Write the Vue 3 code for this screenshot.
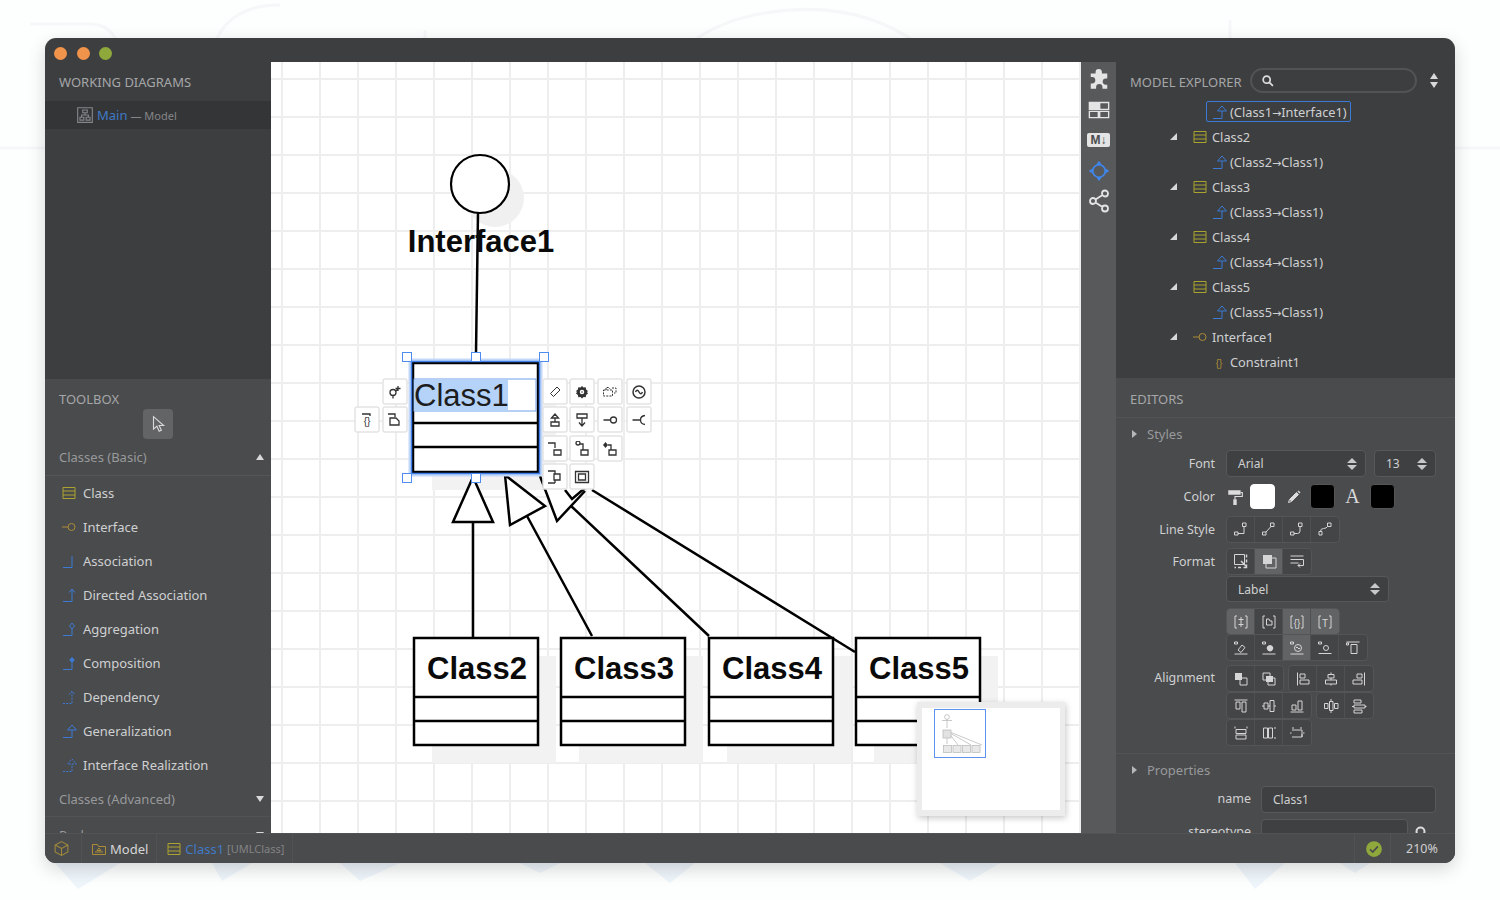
<script setup>
import { h } from 'vue';

const icons = {
  cursor: { s: 'M4 1.5v11l3-2.5 2 4.5 2-1-2-4.2h4z' },
  class: { s: 'M2 2.5h12v11H2zM2 6h12M2 10h12' },
  iface: { s: 'M1 8h6M7 8a3.5 3.5 0 1 0 7 0a3.5 3.5 0 1 0-7 0' },
  assoc: { s: 'M2 14.5h9V3' },
  directed: { s: 'M2 14.5h9V3M8 5.5l3-3.5 3 3.5' },
  aggregation: { s: 'M2 14.5h9V8M11 2l2.5 3-2.5 3-2.5-3z' },
  composition: { s: 'M2 14.5h9V8', f: 'M11 2l2.8 3-2.8 3-2.8-3z' },
  dependency: { s: 'M2 14.5h9V3M8 5.5l3-3.5 3 3.5', dash: true },
  generalization: { s: 'M2 14.5h9V7M6.5 7L11 2l4.5 5z' },
  realization: { s: 'M2 14.5h9V7M6.5 7L11 2l4.5 5z', dash: true },
  braces: { t: '{}' },
  diagram: { s: 'M1.5 1.5h13v13h-13zM6 3.5h4v2.5H6zM3.5 10h3.5v2.5H3.5zM9 10h3.5v2.5H9zM8 6v2M5 10V8h6v2' },
  model: { s: 'M1.5 3.5h5l1 2h7v8h-13zM4 11h8M8 7l2 2.5H6z' },
  cube: { s: 'M8 1.5l6 3.2v6.6l-6 3.2-6-3.2V4.7zM2 4.7L8 8l6-3.3M8 8v6.5' },
  check: { f: 'M8 1a7 7 0 1 0 0 14A7 7 0 0 0 8 1z', s2: 'M4.5 8.3l2.4 2.4 4.6-5' },
  search: { s: 'M2.5 6.5a4 4 0 1 0 8 0a4 4 0 1 0-8 0M9.6 9.6l4 4', w: 2 },
  puzzle: { f: 'M5.5 3a2.3 2.3 0 0 1 4.6 0V4H14v3.6h-1a2.3 2.3 0 0 0 0 4.6h1V15H10.5v-1a2.3 2.3 0 0 0-4.6 0v1H2v-3.8h1a2.3 2.3 0 0 0 0-4.6H2V4h3.5z' },
  panels: { s: 'M1 2.5h6.5v5H1zM8.5 2.5H15v5H8.5zM1 9h6.5v4.5H1zM8.5 9H15v4.5H8.5z', f: 'M1 2.5h6.5v5H1z' },
  target: { s: 'M3 8a5 5 0 1 0 10 0a5 5 0 1 0-10 0M6.5 3.2L8 1l1.5 2.2M6.5 12.8L8 15l1.5-2.2M3.2 6.5L1 8l2.2 1.5M12.8 6.5L15 8l-2.2 1.5', w: 1.3 },
  share: { s: 'M2 8a2 2 0 1 0 4 0a2 2 0 1 0-4 0M10 3a2 2 0 1 0 4 0a2 2 0 1 0-4 0M10 13a2 2 0 1 0 4 0a2 2 0 1 0-4 0M5.7 7l4.6-3M5.7 9l4.6 3', w: 1.2 },
  roller: { s: 'M13 4h1.5v3.5H8V10', f: 'M2 2h11v4H2zM6.5 10h3v5h-3z' },
  pen: { s: 'M2.5 13.5l1-3 7-7 2 2-7 7z', f: 'M3.5 10.5l7-7 2 2-7 7zM11.5 2.5l1-1 2 2-1 1z' },
  lineRect: { s: 'M1.5 11h3.5v3H1.5zM5 12.5h6V5.5M9.5 2H13v3.5H9.5z' },
  lineOblique: { s: 'M1.5 11h3.5v3H1.5zM5 11l5-5.5M9.5 2H13v3.5H9.5z' },
  lineRound: { s: 'M1.5 11h3.5v3H1.5zM5 12.5h3.5q2.5 0 2.5-2.5V5.5M9.5 2H13v3.5H9.5z' },
  lineCurve: { s: 'M2 10.5h3v3.5H2zM3.5 10.5q0-3 3-3t4-2M10.5 2H14v3.5h-3.5z' },
  fit: { s: 'M1.5 1.5h10v10h-10z', s2: 'M13.5 1.5v3M13.5 6.5v3M13.5 11.5v3h-3M8 14.5H5M3 14.5H1.5M8 8l5 5' },
  shadow: { s: 'M5 5h10v10H5z', f: 'M2 2h9v9H2z' },
  wrap: { s: 'M1.5 3h13M1.5 6.5h13M1.5 10h8M14.5 6.5v6H9M11 10.5L9 12.5l2 2' },
  brPlus: { s: 'M4 2H2v12h2M12 2h2v12h-2M8 3v10M5.5 5.5h5M5.5 10.5h5' },
  brNote: { s: 'M4 2H2v12h2M12 2h2v12h-2M5.5 5h2.5l1 2h2v4h-5.5z' },
  brBrace: { s: 'M4 2H2v12h2M12 2h2v12h-2', t: '{}' },
  brText: { s: 'M4 2H2v12h2M12 2h2v12h-2', t: 'T' },
  alTag: { s: 'M1.5 14h13M1.5 2h3v2h-3zM9 5l3 2.5-4 5-3-2.5z' },
  alGear: { s: 'M1.5 14h13M1.5 2h3v2h-3z', f: 'M9 5a3.2 3.2 0 1 0 .01 0z' },
  alWeb: { s: 'M1.5 14h13M1.5 2h3v2h-3zM5.5 8a3.5 3.5 0 1 0 7 0a3.5 3.5 0 1 0-7 0M7 8q1-2 2 0t2 0' },
  alDot: { s: 'M1.5 13.5h13M1.5 2h3v2h-3zM6.5 8a2.5 2.5 0 1 0 5 0a2.5 2.5 0 1 0-5 0' },
  alBox: { s: 'M1.5 2h13M1.5 3h2v2h-2zM6 4.5h6v9H6z' },
  front: { s: 'M7 7h7v7H7z', f: 'M2 2h7v7H2z' },
  back: { s: 'M2 2h7v7H2zM7 7h7v7H7z', f: 'M5 5h7v6H5z' },
  left: { s: 'M2.5 1.5v13M5 3h5v4H5zM5 9h9v4H5z' },
  center: { s: 'M8 1.5v2M8 7v2M8 13v1.5M5 3.5h6V7H5zM2.5 9h11v4h-11z' },
  right: { s: 'M13.5 1.5v13M6 3h5v4H6zM2 9h9v4H2z' },
  top: { s: 'M1.5 2h13M3 4h4v7H3zM9 4h4v10H9z' },
  middle: { s: 'M1 8h2M7 8h2M13 8h2M3 5h4v6H3zM9 2.5h4v11H9z' },
  bottom: { s: 'M1.5 14h13M3 7h4v5H3zM9 3h4v9H9z' },
  spaceH: { s: 'M1.5 5.5h3.5v5H1.5zM6.5 3.5h3.5v9H6.5zM11.5 5.5H15v5h-3.5zM8 1v2M8 13v2' },
  spaceV: { s: 'M3 2h7v3H3zM3 7h11v3H3zM3 12h8v3H3zM1 8.5h2M14 8.5h1.5' },
  sizeH: { s: 'M2 1.5v2M14 1.5v2M3 4.5h10v4H3zM3 10h10v4H3z' },
  sizeW: { s: 'M2.5 3h4v10h-4zM7.5 3h4v10h-4zM13 3h2M13 13h2' },
  sizeXY: { s: 'M4 2v2M12 2v2M3 5h10v7H3M13 9v3M1 8h1.5M14 8h1.5' },
  tag: { s: 'M10 3l3 3-6.5 6.5-3-3z' },
  gear: { f: 'M8 2l1.5 1.6 2.2-.4.4 2.2L14 6.9 13 8l1 1.6-1.9 1.5-.4 2.2-2.2-.4L8 14.5l-1.5-1.6-2.2.4-.4-2.2L2 9.6 3 8 2 6.9l1.9-1.5.4-2.2 2.2.4z', s2: 'M6.5 8a1.5 1.5 0 1 0 3 0a1.5 1.5 0 1 0-3 0', light: true },
  dashBox: { s: 'M1.5 6h9v6h-9zM4 6V3.5h3l1 1.5M10 4h4v5h-2', dash: true },
  webCircle: { s: 'M2 8a6 6 0 1 0 12 0a6 6 0 1 0-12 0M4.5 8q1.7-3.5 3.5 0t3.5 0', w: 1.5 },
  inherit: { s: 'M4 10h8v4H4zM8 10V6M4.5 6L8 2l3.5 4z', w: 1.3 },
  inheritDown: { s: 'M3 2h10v4H3zM8 6v8M5 10.5L8 14l3-3.5', w: 1.3 },
  lollipop: { s: 'M1.5 8h7M8.5 8a3 3 0 1 0 6 0a3 3 0 1 0-6 0', w: 1.3 },
  socket: { s: 'M1.5 8h8M14 3.5Q9.5 4 9.5 8t4.5 4.5', w: 1.3 },
  boxA: { s: 'M1 2h7v5M7 9h7v5H7z', w: 1.3 },
  boxB: { s: 'M2 2a2 2 0 1 0 4 0a2 2 0 1 0-4 0M6 3h3v6M7 9h7v5H7z', w: 1.3 },
  boxC: { s: 'M6 4h3v5M7 9h7v5H7z', f: 'M3.5 1l2.5 3-2.5 3L1 4z', w: 1.3 },
  boxD: { s: 'M1 2h7v3M1 14h7M7 5h6v6H7zM8 11v3', w: 1.3 },
  frame: { s: 'M1.5 2.5h13v11h-13zM4.5 5h7v6h-7z', w: 1.3 },
  lollipopPlus: { s: 'M3 8.5a3 3 0 1 0 6 0a3 3 0 1 0-6 0M6 11.5v3M9 7l2.5-2.5M11 2v5M8.5 4.5h5', w: 1.3 },
  note: { s: 'M1 2h7v3M3 6h6l3 3v4H3z', w: 1.3 },
  noteBrace: { s: 'M3 2h8v2', t: '{}', w: 1.3 },
};

// small icon renderer, every glyph lives in a 16x16 box
const Icon = (props) => {
  const def = icons[props.name] || {};
  const kids = [];
  if (def.f) kids.push(h('path', { d: def.f, fill: 'currentColor', stroke: 'none' }));
  if (def.s) kids.push(h('path', { d: def.s, 'stroke-dasharray': def.dash ? '2 1.2' : null }));
  if (def.s2) kids.push(h('path', { d: def.s2, stroke: def.f ? (def.light ? '#fff' : '#4a4b4d') : 'currentColor', 'stroke-width': 1.5 }));
  if (def.t) kids.push(h('text', { x: 8, y: 12.5, 'text-anchor': 'middle', 'font-size': 10, 'font-family': 'Liberation Sans, sans-serif', fill: 'currentColor', stroke: 'none' }, def.t));
  const size = props.size || 16;
  return h('svg', {
    x: props.x, y: props.y, width: size, height: size, viewBox: '0 0 16 16',
    fill: 'none', stroke: 'currentColor', 'stroke-width': def.w || 1,
    style: 'display:block;flex:none',
  }, kids);
};

const toolItems = [
  { label: 'Class', icon: 'class', tone: 'olive' },
  { label: 'Interface', icon: 'iface', tone: 'gold' },
  { label: 'Association', icon: 'assoc', tone: 'blue' },
  { label: 'Directed Association', icon: 'directed', tone: 'blue' },
  { label: 'Aggregation', icon: 'aggregation', tone: 'blue' },
  { label: 'Composition', icon: 'composition', tone: 'blue' },
  { label: 'Dependency', icon: 'dependency', tone: 'blue' },
  { label: 'Generalization', icon: 'generalization', tone: 'blue' },
  { label: 'Interface Realization', icon: 'realization', tone: 'blue' },
];

const treeRows = [
  { from: '(Class1', to: 'Interface1)', icon: 'generalization', tone: 'blue', child: true, selected: true },
  { label: 'Class2', icon: 'class', tone: 'olive' },
  { from: '(Class2', to: 'Class1)', icon: 'generalization', tone: 'blue', child: true },
  { label: 'Class3', icon: 'class', tone: 'olive' },
  { from: '(Class3', to: 'Class1)', icon: 'generalization', tone: 'blue', child: true },
  { label: 'Class4', icon: 'class', tone: 'olive' },
  { from: '(Class4', to: 'Class1)', icon: 'generalization', tone: 'blue', child: true },
  { label: 'Class5', icon: 'class', tone: 'olive' },
  { from: '(Class5', to: 'Class1)', icon: 'generalization', tone: 'blue', child: true },
  { label: 'Interface1', icon: 'iface', tone: 'gold' },
  { label: 'Constraint1', icon: 'braces', tone: 'gold', child: true },
];

const railIcons = [
  { name: 'puzzle', size: 22 },
  { name: 'panels', size: 22 },
  { name: 'md' },
  { name: 'target', size: 20, active: true },
  { name: 'share', size: 24 },
];

const alignRows = [
  [{ items: [{ n: 'brPlus', on: true }, { n: 'brNote' }, { n: 'brBrace', on: true }, { n: 'brText', on: true }] }],
  [{ items: [{ n: 'alTag' }, { n: 'alGear' }, { n: 'alWeb', on: true }, { n: 'alDot' }, { n: 'alBox' }] }],
  [{ items: [{ n: 'front' }, { n: 'back' }] }, { items: [{ n: 'left' }, { n: 'center' }, { n: 'right' }] }],
  [{ items: [{ n: 'top' }, { n: 'middle' }, { n: 'bottom' }] }, { items: [{ n: 'spaceH' }, { n: 'spaceV' }] }],
  [{ items: [{ n: 'sizeH' }, { n: 'sizeW' }, { n: 'sizeXY' }] }],
];

const classBoxes = [
  { name: 'Class2', x: 414 },
  { name: 'Class3', x: 561 },
  { name: 'Class4', x: 709 },
  { name: 'Class5', x: 856 },
];

const handles = [[407, 357], [476, 357], [544, 357], [407, 478], [476, 478]];

const quickButtons = [
  { x: 383, y: 379, icon: 'lollipopPlus' }, { x: 355, y: 407, icon: 'noteBrace' }, { x: 383, y: 407, icon: 'note' },
  { x: 543, y: 379, icon: 'tag' }, { x: 570, y: 379, icon: 'gear' }, { x: 598, y: 379, icon: 'dashBox' }, { x: 627, y: 379, icon: 'webCircle' },
  { x: 543, y: 407, icon: 'inherit' }, { x: 570, y: 407, icon: 'inheritDown' }, { x: 598, y: 407, icon: 'lollipop' }, { x: 627, y: 407, icon: 'socket' },
  { x: 543, y: 436, icon: 'boxA' }, { x: 570, y: 436, icon: 'boxB' }, { x: 598, y: 436, icon: 'boxC' },
  { x: 543, y: 464, icon: 'boxD' }, { x: 570, y: 464, icon: 'frame' },
];
</script>

<template>
  <div class="page">
    <svg class="backdrop" viewBox="0 0 1500 900" aria-hidden="true">
      <g fill="none" stroke="#f6f7f9" stroke-width="3">
        <path d="M30 24h60q30 0 30 40v85M210 150V60q10-55 70-55M425 150V30M640 150Q650 20 790 10T1000 150M1180 60h120M1230 20v130M0 148h1500" />
      </g>
      <g fill="#eef5fb">
        <path d="M55 863h65l-42 26zM212 863h40l-30 18zM340 863h60l-40 18zM520 863h40l-20 10zM645 863h50l-25 20zM940 863h60l-30 18zM1235 863h50l-30 26zM1340 863h30l-15 10z" />
      </g>
    </svg>

    <div class="window">
      <div class="titlebar">
        <span class="dot orange"></span>
        <span class="dot orange"></span>
        <span class="dot green"></span>
      </div>

      <div class="main">
        <aside class="left">
          <section class="working">
            <h3 class="caption">WORKING DIAGRAMS</h3>
            <div class="diagram-row">
              <span class="grey"><Icon name="diagram" :size="18" /></span>
              <span class="link">Main</span>
              <span class="dim">— Model</span>
            </div>
          </section>

          <section class="toolbox">
            <h3 class="caption tool-caption">TOOLBOX</h3>
            <div class="cursor-wrap">
              <span class="cursor-btn"><Icon name="cursor" :size="18" /></span>
            </div>
            <div class="group-head first">
              <span>Classes (Basic)</span>
              <i class="tri up"></i>
            </div>
            <div class="tool-list">
              <div v-for="item in toolItems" :key="item.label" class="tool-item">
                <span :class="item.tone"><Icon :name="item.icon" /></span>
                <span>{{ item.label }}</span>
              </div>
            </div>
            <div class="group-head adv">
              <span>Classes (Advanced)</span>
              <i class="tri down"></i>
            </div>
            <div class="group-head pack">
              <span>Packages</span>
              <i class="tri down"></i>
            </div>
          </section>
        </aside>

        <div class="canvas">
          <svg class="diagram" viewBox="271 62 810 771" width="810" height="771">
            <circle cx="495" cy="198" r="29" fill="#f0f0f0" />
            <circle cx="480" cy="184" r="29" fill="#fff" stroke="#000" stroke-width="2.2" />
            <path d="M478 213L476 353" stroke="#000" stroke-width="2.5" />
            <text x="481" y="252" class="bold-name" font-size="31">Interface1</text>

            <g v-for="box in classBoxes" :key="box.name">
              <rect :x="box.x + 18" y="656" width="124" height="107" fill="#f2f2f2" />
            </g>
            <rect x="432" y="380" width="124" height="110" fill="#f2f2f2" />

            <g fill="none" stroke="#000" stroke-width="2.5">
              <path d="M473 522V638M527 516L592 636M570 505L709 636M592 490L855 652" />
            </g>
            <g fill="#fff" stroke="#000" stroke-width="2.5" stroke-linejoin="miter">
              <path d="M473 477L453 522H493Z" />
              <path d="M505 475L510 525L545 506Z" />
              <path d="M540 476L557 521L585 491" />
              <path d="M565 490L572 499L585 488" />
            </g>

            <g v-for="box in classBoxes" :key="box.name + '-box'">
              <rect :x="box.x" y="638" width="124" height="107" fill="#fff" stroke="#000" stroke-width="2.5" />
              <path :d="`M${box.x} 697h124M${box.x} 721h124`" stroke="#000" stroke-width="2.5" />
              <text :x="box.x + 63" y="679" class="bold-name" font-size="31">{{ box.name }}</text>
            </g>

            <!-- selected class -->
            <rect x="410" y="360" width="131" height="115" fill="none" stroke="#c4d8f8" stroke-width="3" />
            <rect x="413" y="363" width="125" height="109" fill="#fff" stroke="#000" stroke-width="2.5" />
            <rect x="411.5" y="361.5" width="128" height="112" fill="none" stroke="#3f7ee8" stroke-width="1.5" />
            <path d="M413 423h125M413 447h125" stroke="#000" stroke-width="2.5" />
            <rect x="414" y="379" width="122" height="32" fill="#fff" stroke="#6f9fea" stroke-width="1" />
            <rect x="414" y="380" width="94" height="31" fill="#b5d2f8" />
            <text x="414" y="406" class="edit-name" font-size="31">Class1</text>
            <rect v-for="p in handles" :key="p.join()" :x="p[0] - 4.5" :y="p[1] - 4.5" width="9" height="9" fill="#fff" stroke="#4f8cf0" stroke-width="1" />

            <g v-for="btn in quickButtons" :key="btn.icon" class="quick">
              <rect :x="btn.x" :y="btn.y" width="24" height="25" rx="2" fill="#fff" stroke="#e4e4e4" stroke-width="1.5" />
              <Icon :name="btn.icon" :x="btn.x + 4" :y="btn.y + 5" :size="16" />
            </g>

            <!-- minimap -->
            <rect x="917" y="702" width="148" height="114" fill="#ececec" class="mini-shadow" />
            <rect x="922" y="708" width="138" height="102" fill="#fff" />
            <g stroke="#bdbdbd" stroke-width="0.8" fill="none">
              <circle cx="947" cy="717" r="2.4" />
              <path d="M947 719v9M942 720.5h10M947 733l0 11M949 733l9 12M950 733l21 12M950 732l32 13" />
              <rect x="943" y="730" width="8" height="8" fill="#e2e2e2" />
              <rect x="943.5" y="745.5" width="8" height="7" fill="#e8e8e8" />
              <rect x="953" y="745.5" width="8" height="7" fill="#e8e8e8" />
              <rect x="962.5" y="745.5" width="8" height="7" fill="#e8e8e8" />
              <rect x="972" y="745.5" width="8" height="7" fill="#e8e8e8" />
            </g>
            <rect x="934.5" y="709.5" width="51" height="48" fill="none" stroke="#5d93ee" stroke-width="1" />
          </svg>
        </div>

        <nav class="rail">
          <div v-for="item in railIcons" :key="item.name" class="rail-item" :class="{ active: item.active }">
            <span v-if="item.name === 'md'" class="md-badge">M↓</span>
            <Icon v-else :name="item.name" :size="item.size" />
          </div>
        </nav>

        <aside class="right">
          <section class="explorer">
            <div class="explorer-head">
              <h3 class="caption">MODEL EXPLORER</h3>
              <div class="search">
                <Icon name="search" :size="14" />
              </div>
              <span class="spin"><i class="tri up"></i><i class="tri down"></i></span>
            </div>
            <div class="tree">
              <div v-for="(row, i) in treeRows" :key="i" class="tree-row" :class="{ child: row.child }">
                <span v-if="!row.child" class="expander"></span>
                <span class="tree-cell" :class="{ selected: row.selected }">
                  <span :class="row.tone"><Icon :name="row.icon" /></span>
                  <span v-if="row.from" class="tree-label">{{ row.from }}<span class="arrow">→</span>{{ row.to }}</span>
                  <span v-else class="tree-label">{{ row.label }}</span>
                </span>
              </div>
            </div>
          </section>

          <section class="editors">
            <h3 class="caption editors-cap">EDITORS</h3>
            <div class="fold"><i class="tri side"></i>Styles</div>

            <div class="form-row font-row">
              <label>Font</label>
              <div class="select w140"><span>Arial</span><span class="spin small"><i class="tri up"></i><i class="tri down"></i></span></div>
              <div class="select w62"><span>13</span><span class="spin small"><i class="tri up"></i><i class="tri down"></i></span></div>
            </div>

            <div class="form-row color-row">
              <label>Color</label>
              <span class="light-icon"><Icon name="roller" :size="18" /></span>
              <span class="swatch white"></span>
              <span class="light-icon pen"><Icon name="pen" :size="16" /></span>
              <span class="swatch"></span>
              <span class="big-a">A</span>
              <span class="swatch"></span>
            </div>

            <div class="form-row line-row">
              <label>Line Style</label>
              <div class="btn-group">
                <span v-for="n in ['lineRect', 'lineOblique', 'lineRound', 'lineCurve']" :key="n" class="tool"><Icon :name="n" /></span>
              </div>
            </div>

            <div class="form-row format-row">
              <label>Format</label>
              <div class="btn-group">
                <span class="tool"><Icon name="fit" /></span>
                <span class="tool on"><Icon name="shadow" /></span>
                <span class="tool"><Icon name="wrap" /></span>
              </div>
            </div>

            <div class="form-row label-row">
              <label></label>
              <div class="select w163"><span>Label</span><span class="spin small"><i class="tri up"></i><i class="tri down"></i></span></div>
            </div>

            <div class="form-row align-row">
              <label>Alignment</label>
              <div class="align-stack">
                <div v-for="(row, i) in alignRows" :key="i" class="align-line">
                  <div v-for="(group, j) in row" :key="j" class="btn-group">
                    <span v-for="b in group.items" :key="b.n" class="tool" :class="{ on: b.on }"><Icon :name="b.n" /></span>
                  </div>
                </div>
              </div>
            </div>

            <div class="fold props"><i class="tri side"></i>Properties</div>

            <div class="prop-row">
              <label>name</label>
              <div class="prop-input">Class1</div>
            </div>
            <div class="prop-row second">
              <label>stereotype</label>
              <div class="prop-input short"></div>
              <span class="light-icon"><Icon name="search" :size="16" /></span>
            </div>
          </section>
        </aside>
      </div>

      <footer class="status">
        <span class="st-cell cube gold"><Icon name="cube" :size="17" /></span>
        <span class="st-cell">
          <span class="gold"><Icon name="model" /></span>
          <span class="st-model">Model</span>
        </span>
        <span class="st-cell">
          <span class="olive"><Icon name="class" /></span>
          <span class="link">Class1</span>
          <span class="st-kind">[UMLClass]</span>
        </span>
        <span class="st-fill"></span>
        <span class="st-cell st-check"><Icon name="check" :size="18" /></span>
        <span class="st-cell st-zoom">210%</span>
      </footer>
    </div>
  </div>
</template>

<style>
html, body { margin: 0; background: #fdfefe; }
</style>

<style scoped>
.page {
  position: relative;
  width: 1500px;
  height: 900px;
  padding: 38px 45px 37px;
  box-sizing: border-box;
  overflow: hidden;
  font-family: "Noto Sans", "Open Sans", sans-serif;
  font-size: 13px;
  color: #cfd0d1;
}
.backdrop { position: absolute; inset: 0; width: 1500px; height: 900px; }

.window {
  position: relative;
  height: 825px;
  display: flex;
  flex-direction: column;
  border-radius: 11px;
  overflow: hidden;
  background: #3d3e40;
  box-shadow: 0 6px 18px rgba(0, 0, 0, 0.16);
}

.titlebar {
  height: 24px;
  flex: none;
  display: flex;
  align-items: center;
  gap: 9.5px;
  padding: 6px 0 0 9px;
  box-sizing: border-box;
}
.dot { width: 13px; height: 13px; border-radius: 50%; }
.orange { background: #f0934b; }
.green { background: #8fa83c; }

.main { flex: 1; display: flex; min-height: 0; }

.left { width: 226px; flex: none; display: flex; flex-direction: column; }
.working { height: 317px; flex: none; background: #3d3e40; }
.caption {
  margin: 0;
  font-size: 13px;
  font-weight: 400;
  color: #a5a6a8;
}
.working .caption { padding: 11px 14px 0; height: 28px; }
.diagram-row {
  height: 28px;
  background: #343537;
  display: flex;
  align-items: center;
  padding-left: 31px;
  gap: 3px;
}
.grey { color: #85868a; }
.link { color: #3f7ac6; }
.dim { color: #848587; font-size: 11px; }

.toolbox { flex: 1; background: #4a4b4d; overflow: hidden; min-height: 0; }
.tool-caption { padding: 11px 14px 0; height: 19px; line-height: 18px; }
.cursor-wrap { display: flex; justify-content: center; height: 30px; }
.cursor-btn {
  width: 30px;
  height: 30px;
  border-radius: 4px;
  background: #636466;
  color: #d8d8d8;
  display: flex;
  align-items: center;
  justify-content: center;
}
.group-head {
  display: flex;
  justify-content: space-between;
  align-items: center;
  height: 37px;
  padding: 0 7px 0 14px;
  color: #98999b;
  box-sizing: border-box;
}
.group-head.first { height: 37px; border-bottom: 1px solid #555658; }
.group-head.adv { height: 35px; border-bottom: 1px solid #525355; }
.group-head.pack { height: 30px; padding-top: 6px; }

.tri { display: block; width: 0; height: 0; border-left: 4px solid transparent; border-right: 4px solid transparent; }
.tri.up { border-bottom: 6px solid #d9d9d9; }
.tri.down { border-top: 6px solid #d9d9d9; }
.tri.side { border: 0; border-top: 4px solid transparent; border-bottom: 4px solid transparent; border-left: 5px solid #b6b7b8; }

.tool-item {
  height: 34px;
  display: flex;
  align-items: center;
  gap: 6px;
  padding-left: 16px;
  color: #cfd0d1;
}
.olive { color: #aba32f; }
.gold { color: #ab8c37; }
.blue { color: #3b7bd6; }

.canvas {
  position: relative;
  width: 810px;
  flex: none;
  overflow: hidden;
  background-color: #fff;
  background-image:
    linear-gradient(#eeeeee 2px, transparent 2px),
    linear-gradient(90deg, #eeeeee 2px, transparent 2px);
  background-size: 38px 38px;
  background-position: 10px 16px;
}
.diagram { position: absolute; left: 0; top: 0; display: block; }
.bold-name { font-family: "Liberation Sans", Arial, sans-serif; font-weight: 700; text-anchor: middle; fill: #0a0a0a; }
.edit-name { font-family: "Liberation Sans", Arial, sans-serif; fill: #1d1d1d; }
.quick { color: #333; }
.mini-shadow { filter: drop-shadow(1px 2px 3px rgba(0, 0, 0, 0.22)); }

.rail {
  width: 35px;
  flex: none;
  background: #58595b;
  padding-top: 2px;
  box-sizing: border-box;
  color: #e4e4e4;
}
.rail-item { height: 30.5px; display: flex; align-items: center; justify-content: center; }
.rail-item.active { color: #3f86ee; }
.md-badge {
  width: 23px;
  height: 14px;
  border-radius: 2px;
  background: #e4e4e4;
  color: #4a4b4d;
  font: 700 12px/14px "Liberation Sans", sans-serif;
  text-align: center;
}

.right { width: 339px; flex: none; display: flex; flex-direction: column; }
.explorer { height: 316px; flex: none; background: #3d3e40; overflow: hidden; }
.explorer-head {
  height: 37px;
  display: flex;
  align-items: center;
  padding: 2px 0 0 14px;
  box-sizing: border-box;
}
.search {
  width: 167px;
  height: 25px;
  margin-left: 8px;
  margin-top: -2px;
  box-sizing: border-box;
  border: 2px solid #525355;
  border-radius: 13px;
  color: #dcdcdc;
  display: flex;
  align-items: center;
  padding-left: 9px;
}
.spin { display: inline-flex; flex-direction: column; gap: 3px; margin-left: 13px; margin-top: -3px; }
.spin.small { margin: 0; gap: 2px; }
.spin.small .tri { border-left-width: 5px; border-right-width: 5px; }
.spin.small .tri.up { border-bottom: 5px solid #c8c9ca; }
.spin.small .tri.down { border-top: 5px solid #c8c9ca; }

.tree-row { height: 25px; display: flex; align-items: center; padding-left: 54px; }
.tree-row.child { padding-left: 90px; }
.expander {
  width: 0;
  height: 0;
  margin-right: 15px;
  border-left: 7px solid transparent;
  border-bottom: 7px solid #d7d7d7;
}
.tree-cell { display: flex; align-items: center; gap: 3px; height: 21px; padding: 0 3px 0 4px; border-radius: 2px; border: 1px solid transparent; box-sizing: border-box; }
.tree-row:not(.child) .tree-cell { padding-left: 0; margin-left: -1px; gap: 4px; }
.tree-cell.selected { border-color: #3b7bd6; }
.tree-label { font-size: 12.8px; }
.arrow { font: 11px "DejaVu Sans", sans-serif; }

.editors { flex: 1; min-height: 0; background: #4a4b4d; overflow: hidden; }
.editors-cap { height: 40px; line-height: 43px; padding-left: 14px; border-bottom: 1px solid #525355; box-sizing: border-box; }
.fold {
  display: flex;
  align-items: center;
  gap: 10px;
  height: 32px;
  padding-left: 16px;
  color: #98999b;
}
.form-row { display: flex; align-items: center; color: #cfd0d1; }
.form-row label, .prop-row label { flex: none; text-align: right; font-size: 12.5px; }
.form-row label { width: 99px; margin-right: 11px; }

.select {
  height: 27px;
  box-sizing: border-box;
  display: flex;
  align-items: center;
  justify-content: space-between;
  padding: 0 8px 0 11px;
  background: #3f4042;
  border: 1px solid #575859;
  border-radius: 4px;
  font-size: 12px;
}
.w140 { width: 140px; }
.w62 { width: 62px; margin-left: 8px; }
.w163 { width: 163px; height: 26px; }

.font-row { height: 27px; }
.color-row { height: 25px; margin-top: 7px; }
.light-icon { color: #dcdcdc; display: block; }
.swatch { width: 25px; height: 25px; border-radius: 4px; background: #000; border: 1px solid #555; box-sizing: border-box; }
.swatch.white { background: #fff; border-color: #fff; margin-left: 6px; }
.pen { margin: 0 8px 0 11px; }
.big-a { width: 35px; text-align: center; font: 20px "Liberation Serif", serif; color: #d8d8d8; }
.line-row { height: 26px; margin-top: 7px; }
.format-row { height: 26px; margin-top: 6px; }
.label-row { height: 26px; margin-top: 2px; }
.align-row { margin-top: 6px; }
.align-stack { display: flex; flex-direction: column; }
.align-line { display: flex; gap: 4px; }
.align-line:nth-child(2) { margin-top: -1px; }
.align-line:nth-child(3) { margin-top: 4px; }

.btn-group {
  display: flex;
  background: #444547;
  border: 1px solid #545557;
  border-radius: 4px;
  overflow: hidden;
}
.tool {
  width: 28px;
  height: 25px;
  display: flex;
  align-items: center;
  justify-content: center;
  color: #d5d5d5;
  border-right: 1px solid #4f5052;
  box-sizing: border-box;
}
.tool:last-child { border-right: 0; }
.tool.on { background: #626365; }

.fold.props { height: 31px; margin-top: 7px; border-top: 1px solid #525355; }
.prop-row { display: flex; align-items: center; margin-top: 1px; }
.prop-row label { width: 135px; margin-right: 10px; color: #cfd0d1; margin-top: -3px; }
.prop-input {
  width: 175px;
  height: 27px;
  box-sizing: border-box;
  padding: 0 11px;
  line-height: 26px;
  background: #3f4042;
  border: 1px solid #585959;
  border-radius: 4px;
  font-size: 12px;
}
.prop-input.short { width: 147px; margin-right: 6px; }
.prop-row.second { margin-top: 6px; }

.status {
  height: 30px;
  flex: none;
  display: flex;
  align-items: center;
  background: #4a4b4d;
  border-top: 1px solid #525355;
  box-sizing: border-box;
}
.st-cell {
  height: 100%;
  display: flex;
  align-items: center;
  gap: 3px;
  padding: 0 8px 0 9px;
  border-right: 1px solid #515254;
  box-sizing: border-box;
}
.st-cell.cube { width: 37px; padding-left: 8px; color: #a08a3a; }
.st-model { color: #d6d6d6; }
.st-kind { color: #828385; font-size: 11px; }
.st-fill { flex: 1; }
.st-check { width: 37px; padding-left: 10px; color: #8fa83c; border-left: 1px solid #515254; }
.st-zoom { width: 64px; padding-left: 15px; border-right: 0; font-size: 12.5px; }
</style>
